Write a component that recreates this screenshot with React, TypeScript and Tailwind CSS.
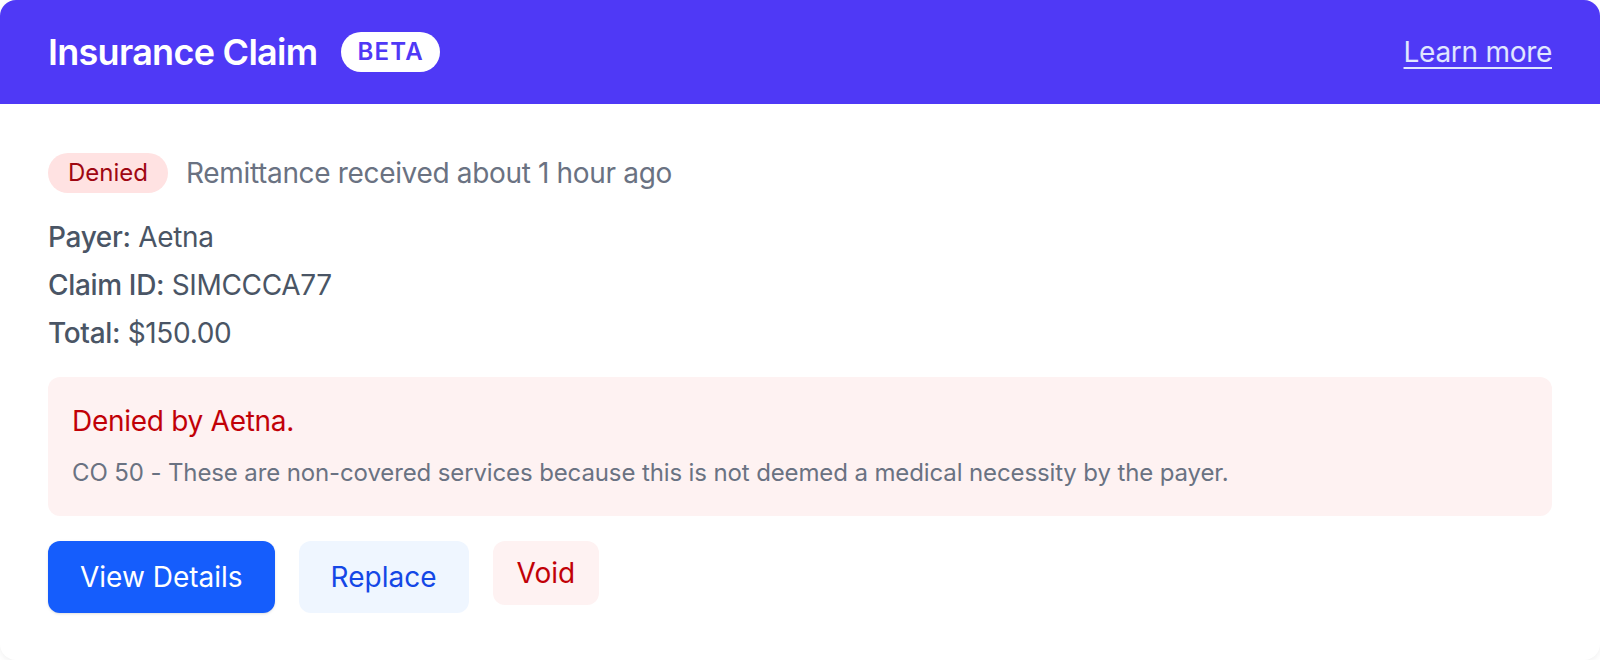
import React from 'react';

const claim = {
    payer: 'Aetna',
    id: 'SIMCCCA77',
    total: '$150.00',
    received: 'about 1 hour ago',
    reason: 'CO 50 - These are non-covered services because this is not deemed a medical necessity by the payer.',
};

function Field({ label, value }: { label: string; value: string }) {
    return (
        <p className="text-[28px] leading-[40px] tracking-[-0.012em] text-gray-600">
            <span className="font-medium">{label}:</span> {value}
        </p>
    );
}

export default function App() {
    return (
        <div className="min-h-[660px] w-full bg-white font-['Inter',sans-serif]">
            <div className="flex h-[660px] flex-col overflow-hidden rounded-2xl bg-white shadow-[0_2px_6px_rgba(0,0,0,0.06)]">
                {/* Header */}
                <header className="flex h-[104px] shrink-0 items-center justify-between bg-indigo-600 px-12">
                    <div className="flex items-center gap-6">
                        <h1 className="text-[36px] font-semibold leading-none tracking-[-0.02em] text-white">Insurance Claim</h1>
                        <span className="flex h-10 items-center rounded-full bg-white px-4 text-[24px] font-semibold tracking-wider text-indigo-600">
                            BETA
                        </span>
                    </div>
                    <a href="#" className="text-[28px] tracking-[-0.01em] text-indigo-100 underline underline-offset-[5px]">
                        Learn more
                    </a>
                </header>

                {/* Body */}
                <div className="flex flex-col p-12">
                    <div className="flex items-center gap-[18px]">
                        <span className="flex h-10 items-center rounded-full bg-red-100 px-5 text-[24px] text-red-800">
                            Denied
                        </span>
                        <span className="text-[28px] tracking-[-0.012em] text-gray-500">Remittance received {claim.received}</span>
                    </div>

                    <div className="mt-[23px] flex flex-col gap-2">
                        <Field label="Payer" value={claim.payer} />
                        <Field label="Claim ID" value={claim.id} />
                        <Field label="Total" value={claim.total} />
                    </div>

                    {/* Denial reason */}
                    <div className="mt-6 rounded-xl bg-red-50 px-6 pt-6 pb-[27px]">
                        <p className="text-[28px] leading-[40px] tracking-[-0.01em] text-red-700">Denied by {claim.payer}.</p>
                        <p className="mt-4 text-[24px] leading-8 tracking-[-0.005em] text-gray-500">{claim.reason}</p>
                    </div>

                    {/* Actions */}
                    <div className="mt-[25px] flex items-start gap-6">
                        <button className="h-[72px] rounded-xl bg-blue-600 px-8 text-[28px] text-white shadow-sm">
                            View Details
                        </button>
                        <button className="h-[72px] rounded-xl bg-blue-50 px-8 text-[28px] text-blue-700">
                            Replace
                        </button>
                        <button className="h-16 rounded-xl bg-red-50 px-6 text-[28px] text-red-700">
                            Void
                        </button>
                    </div>
                </div>
            </div>
        </div>
    );
}
